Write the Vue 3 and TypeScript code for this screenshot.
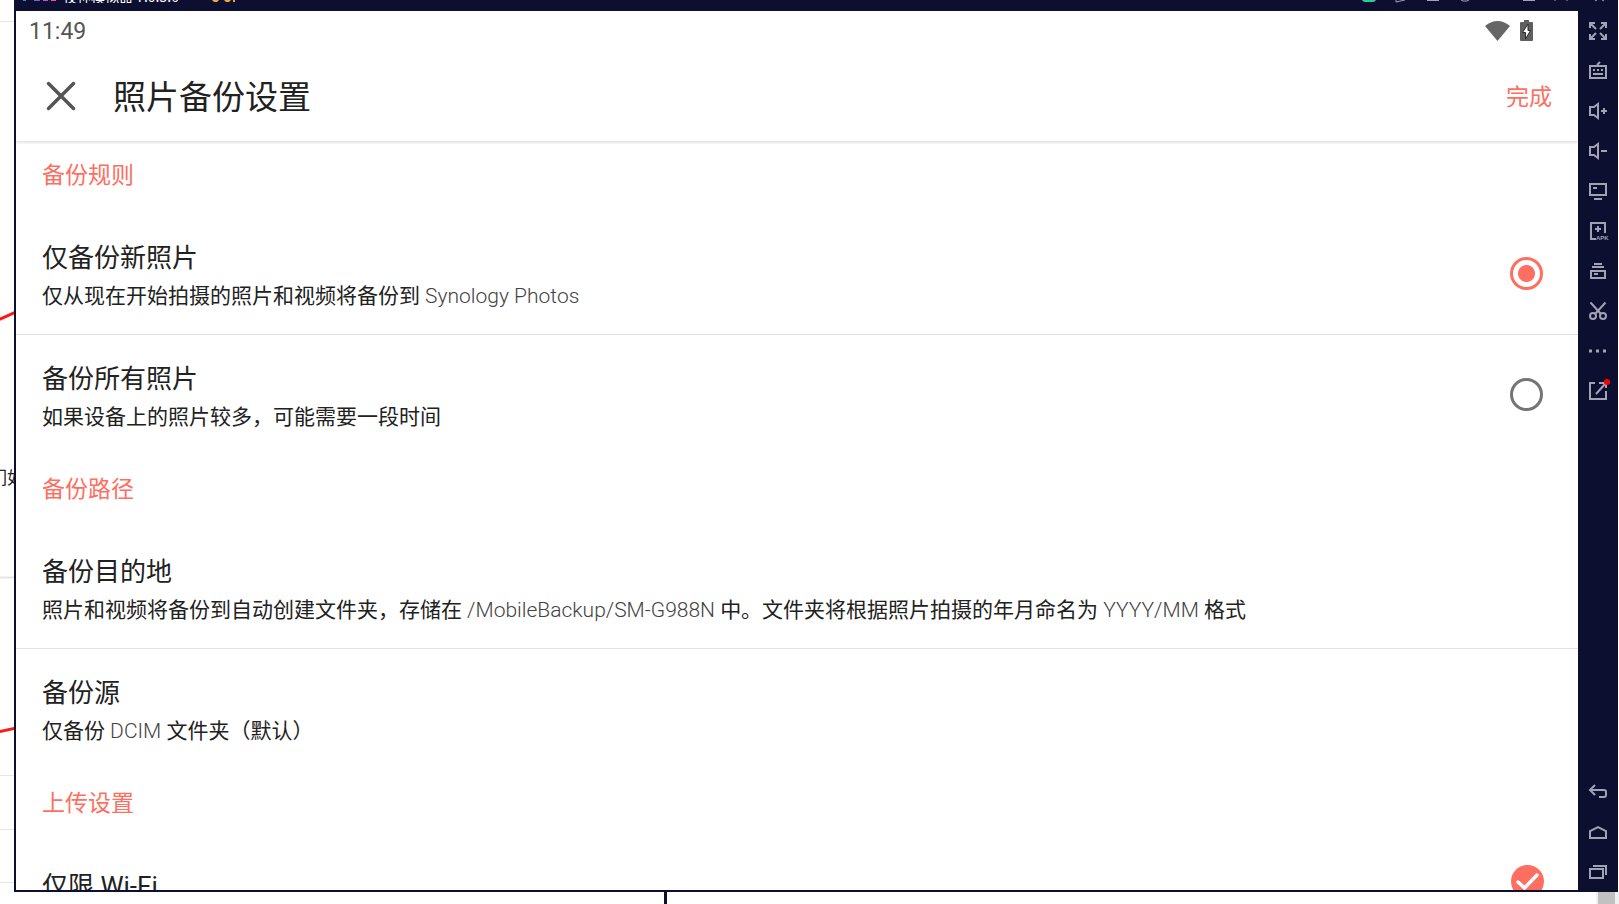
<script setup lang="ts">
import { ref } from 'vue'

type Rule = 'new' | 'all'

const rule = ref<Rule>('new')
const wifiOnly = ref(true)

const rules: { id: Rule; title: string; note: string }[] = [
  { id: 'new', title: '仅备份新照片', note: '仅从现在开始拍摄的照片和视频将备份到 Synology Photos' },
  { id: 'all', title: '备份所有照片', note: '如果设备上的照片较多，可能需要一段时间' },
]

const paths = [
  {
    title: '备份目的地',
    note: '照片和视频将备份到自动创建文件夹，存储在 /MobileBackup/SM-G988N 中。文件夹将根据照片拍摄的年月命名为 YYYY/MM 格式',
  },
  { title: '备份源', note: '仅备份 DCIM 文件夹（默认）' },
]

// Latin runs are set in a lighter weight than the Chinese text around them.
function runs(text: string): { text: string; latin: boolean }[] {
  return text
    .split(/([\x20-\x7e]+)/)
    .filter((part) => part !== '')
    .map((part) => ({ text: part, latin: /^[\x20-\x7e]/.test(part) }))
}
</script>

<template>
  <div class="desktop">
    <svg class="behind-left" width="14" height="892" aria-hidden="true">
      <path d="M0 21.5h14M0 775.5h14M0 829.5h14M0 882.5h14" stroke="#e6e6e6" />
      <path d="M0 577.5h14" stroke="#e4e4e4" stroke-width="2" />
      <path d="M-2 320L16 312M-2 732L16 728" stroke="#ff1a0d" stroke-width="3" />
      <text x="-10" y="484" class="behind-text">们如</text>
    </svg>

    <div class="emulator">
      <header class="titlebar">
        <div class="title-left">
          <svg width="36" height="3" aria-hidden="true">
            <rect x="0" width="3" height="1" fill="#3d7df5" />
            <rect x="11" width="6" height="1" fill="#7d5fd0" />
            <rect x="20" width="5" height="1" fill="#a95bc8" />
            <rect x="28" width="5" height="1" fill="#e8549c" />
          </svg>
          <span class="title-name">夜神模拟器 7.0.5.6</span>
          <svg width="24" height="3" aria-hidden="true">
            <path d="M0 0h7l-2 2h-3zM12 0h7l-2 2h-3zM21 0h2v2h-2z" fill="#f0a63c" />
          </svg>
        </div>
        <svg width="256" height="3" aria-hidden="true">
          <path d="M0 0h14q-1 2-3 2H3Q1 2 0 0z" fill="#25cf96" />
          <path d="M34 0v2l9-2M65 .5h12M99 0l2 1h4l2-1M161 .5h12M193 0v1M205 0v1M233 1l2-1M240 0l2 1" fill="none" stroke="#a1a3b4" />
        </svg>
      </header>

      <main class="screen">
        <div class="statusbar">
          <time>11:49</time>
          <div class="status-icons">
            <svg width="25" height="22" viewBox="0 0 25 22" aria-hidden="true">
              <path d="M0 6Q12.500-4 25 6L12.500 21z" fill="#666" />
            </svg>
            <svg width="13" height="22" viewBox="0 0 13 22" aria-hidden="true">
              <path d="M4 0h5v2h3q1 0 1 1v17q0 1-1 1H1q-1 0-1-1V3q0-1 1-1h3z" fill="#5f5f5f" />
              <path d="M8 4L2.500 12.500h3V19L10.500 10.500H8z" fill="#fff" stroke="#2b2b2b" stroke-width="1" />
            </svg>
          </div>
        </div>

        <div class="appbar">
          <button class="close" type="button" aria-label="关闭">
            <svg width="30" height="30" viewBox="0 0 30 30" aria-hidden="true">
              <path d="M2.500 2.500l25 25M27.500 2.500l-25 25" stroke="#555" stroke-width="3.500" stroke-linecap="round" />
            </svg>
          </button>
          <h1>照片备份设置</h1>
          <button class="done" type="button">完成</button>
        </div>

        <div class="content">
          <section>
            <h2>备份规则</h2>
            <label v-for="r in rules" :key="r.id" class="row">
              <span class="copy">
                <span class="name">{{ r.title }}</span>
                <span class="note"><span v-for="(part, i) in runs(r.note)" :key="i" :class="{ latin: part.latin }">{{ part.text }}</span></span>
              </span>
              <input v-model="rule" type="radio" name="rule" :value="r.id" />
            </label>
          </section>

          <section>
            <h2>备份路径</h2>
            <button v-for="p in paths" :key="p.title" type="button" class="row">
              <span class="copy">
                <span class="name">{{ p.title }}</span>
                <span class="note"><span v-for="(part, i) in runs(p.note)" :key="i" :class="{ latin: part.latin }">{{ part.text }}</span></span>
              </span>
            </button>
          </section>

          <section>
            <h2>上传设置</h2>
            <label class="row single">
              <span class="copy"><span class="name">仅限 Wi-Fi</span></span>
              <span class="check">
                <input v-model="wifiOnly" type="checkbox" />
                <svg v-if="wifiOnly" width="33" height="33" viewBox="0 0 33 33" aria-hidden="true">
                  <path d="M7 17l6.500 6L26 10" fill="none" stroke="#fff" stroke-width="3.500" stroke-linecap="round" />
                </svg>
              </span>
            </label>
          </section>
        </div>
      </main>

      <nav class="tools" aria-label="工具栏">
        <button type="button" aria-label="全屏">
          <svg viewBox="0 0 20 20"><path d="M2 7V2h5M2 2l6 6M13 2h5v5M18 2l-6 6M2 13v5h5M2 18l6-6M18 13v5h-5M18 18l-6-6" /></svg>
        </button>
        <button type="button" aria-label="键盘">
          <svg viewBox="0 0 20 20"><path d="M2 5h16v12H2zM9 4l3-3M5 9h2M9 9h2M13 9h2M5 13h10" /></svg>
        </button>
        <button type="button" aria-label="音量加">
          <svg viewBox="0 0 20 20"><path d="M10 3v14l-4-3H2V6h4zM13 10h6M16 7v6" /></svg>
        </button>
        <button type="button" aria-label="音量减">
          <svg viewBox="0 0 20 20"><path d="M10 3v14l-4-3H2V6h4zM13 10h6" /></svg>
        </button>
        <button type="button" aria-label="显示">
          <svg viewBox="0 0 20 20"><path d="M2 3h16v11H2zM5 7h4M6 18h8" /></svg>
        </button>
        <button type="button" aria-label="安装应用">
          <svg viewBox="0 0 20 20"><path d="M17 12V2H3v16h5M7 8h6M10 5v6" /><text x="8" y="19" class="apk">APK</text></svg>
        </button>
        <button type="button" aria-label="多开">
          <svg viewBox="0 0 20 20"><path d="M6 3h8M4 6h12M3 10h14v7H3zM6 13h4" /></svg>
        </button>
        <button type="button" aria-label="截图">
          <svg viewBox="0 0 20 20"><path d="M2.500 1.500L13 13M17.500 1.500L7 13" /><circle cx="5" cy="15" r="3" /><circle cx="15" cy="15" r="3" /></svg>
        </button>
        <button type="button" aria-label="更多">
          <svg viewBox="0 0 20 20"><path d="M1 10h3M8 10h3M15 10h3" stroke-width="3" /></svg>
        </button>
        <button type="button" aria-label="弹出">
          <svg viewBox="0 0 20 20"><path d="M7 2H2v16h16v-8M8 13l9-10M11 2h7v5" /><circle cx="19" cy="1" r="3" class="dot" /></svg>
        </button>
        <button type="button" class="push" aria-label="返回">
          <svg viewBox="0 0 20 20"><path d="M7 3L2 8l5 5M2 8h14q2 0 2 2v3q0 2-2 2h-5" /></svg>
        </button>
        <button type="button" aria-label="主页">
          <svg viewBox="0 0 20 20"><path d="M2 16V9l8-4 8 4v7z" /></svg>
        </button>
        <button type="button" aria-label="最近任务">
          <svg viewBox="0 0 20 20"><path d="M2 7h13v9H2zM5 4h13v9" /></svg>
        </button>
      </nav>
    </div>

    <div class="behind-bottom" aria-hidden="true">
      <span class="rule-line"></span>
      <span class="scroll"><span class="thumb"></span></span>
    </div>
  </div>
</template>

<style>
body {
  margin: 0;
  background: #fff;
}
</style>

<style scoped>
* {
  box-sizing: border-box;
}
.desktop {
  height: 100vh;
  display: grid;
  grid-template: minmax(0, 1fr) 12px / 14px minmax(0, 1fr) 1px;
  overflow: hidden;
  font-family: Roboto, 'Noto Sans CJK SC', sans-serif;
  color: #212121;
}
.behind-text {
  font: 17px 'Noto Sans CJK SC', sans-serif;
  fill: #222;
}
.emulator {
  display: grid;
  grid-template: 11px minmax(0, 1fr) / minmax(0, 1fr) 40px;
  background: #0c0f2f;
}
.titlebar {
  grid-column: 1 / -1;
  height: 3px;
  padding: 0 0 0 9px;
  display: flex;
  justify-content: space-between;
  overflow: hidden;
}
.title-left {
  display: flex;
  align-items: flex-end;
}
.title-left svg,
.titlebar > svg {
  flex: none;
}
.title-name {
  width: 149px;
  margin-left: 4px;
  font-family: 'Noto Sans CJK SC', sans-serif;
  font-size: 14px;
  line-height: 14px;
  color: #fff;
  white-space: nowrap;
}
.screen {
  margin: 0 0 2px 2px;
  min-height: 0;
  display: flex;
  flex-direction: column;
  overflow: hidden;
  background: #fff;
}
.statusbar {
  flex: none;
  height: 40px;
  padding: 0 45px 0 13px;
  display: flex;
  align-items: center;
  justify-content: space-between;
}
.statusbar time {
  font-size: 23px;
  color: #555;
}
.status-icons {
  display: flex;
  gap: 10px;
}
.appbar {
  position: relative;
  flex: none;
  height: 90px;
  padding: 0 26px 0 30px;
  display: flex;
  align-items: center;
  box-shadow: 0 2px 2px #e6e6e6;
}
button {
  padding: 0;
  border: 0;
  background: none;
  font: inherit;
  color: inherit;
  cursor: pointer;
}
.close {
  display: flex;
}
h1 {
  flex: 1;
  margin: 0 0 0 37px;
  padding-top: 3px;
  font-size: 33px;
  line-height: 48px;
  font-weight: 400;
}
.done {
  padding-top: 3px;
  font-size: 23px;
  line-height: 34px;
  color: #ff6f61;
}
.content {
  flex: 1;
  min-height: 0;
  overflow: hidden;
}
h2 {
  height: 73px;
  margin: 0;
  padding: 18px 26px 0;
  font-size: 23px;
  line-height: 34px;
  font-weight: 400;
  color: #ff6f61;
}
.row {
  width: 100%;
  height: 120px;
  padding: 6px 35px 0 26px;
  display: flex;
  align-items: center;
  justify-content: space-between;
  text-align: left;
}
.row + .row {
  height: 121px;
  border-top: 1px solid #e2e2e2;
}
.copy {
  display: flex;
  flex-direction: column;
}
.name {
  font-size: 26px;
  line-height: 38px;
}
.note {
  font-size: 21px;
  line-height: 38px;
  white-space: pre-wrap;
}
.latin {
  font-weight: 300;
  color: #424242;
}
.single {
  height: 82px;
  padding-right: 34px;
}
input {
  appearance: none;
  flex: none;
  width: 33px;
  height: 33px;
  margin: 0 0 7px;
  border: 3px solid #757575;
  border-radius: 50%;
}
input[type='radio']:checked {
  border-color: #ff6f61;
  background: radial-gradient(circle, #ff6f61 8px, transparent 9px);
}
.check {
  display: grid;
  margin-bottom: 10px;
}
.check > * {
  grid-area: 1 / 1;
  margin: 0;
}
.check input:checked {
  border-color: #ff6f61;
  background: #ff6f61;
}
.check svg {
  pointer-events: none;
  z-index: 1;
}
.tools {
  display: flex;
  flex-direction: column;
}
.tools button {
  flex: none;
  height: 40px;
  display: flex;
  align-items: center;
  justify-content: center;
}
.tools .push {
  margin-top: auto;
}
.tools svg {
  width: 20px;
  height: 20px;
  overflow: visible;
  fill: none;
  stroke: #a1a3b4;
  stroke-width: 2;
}
.tools .apk {
  font: bold 6px 'Liberation Sans', sans-serif;
  fill: #a1a3b4;
  stroke: none;
}
.tools .dot {
  fill: #f00;
  stroke: none;
}
.behind-bottom {
  grid-column: 1 / -1;
  grid-row: 2;
  display: flex;
  justify-content: space-between;
}
.rule-line {
  width: 3px;
  margin-left: 41%;
  background: #0c0f2f;
}
.scroll {
  width: 23px;
  padding: 0 4px 0 2px;
  background: #f1f1f1;
}
.thumb {
  display: block;
  height: 100%;
  background: #c1c1c1;
}
</style>
